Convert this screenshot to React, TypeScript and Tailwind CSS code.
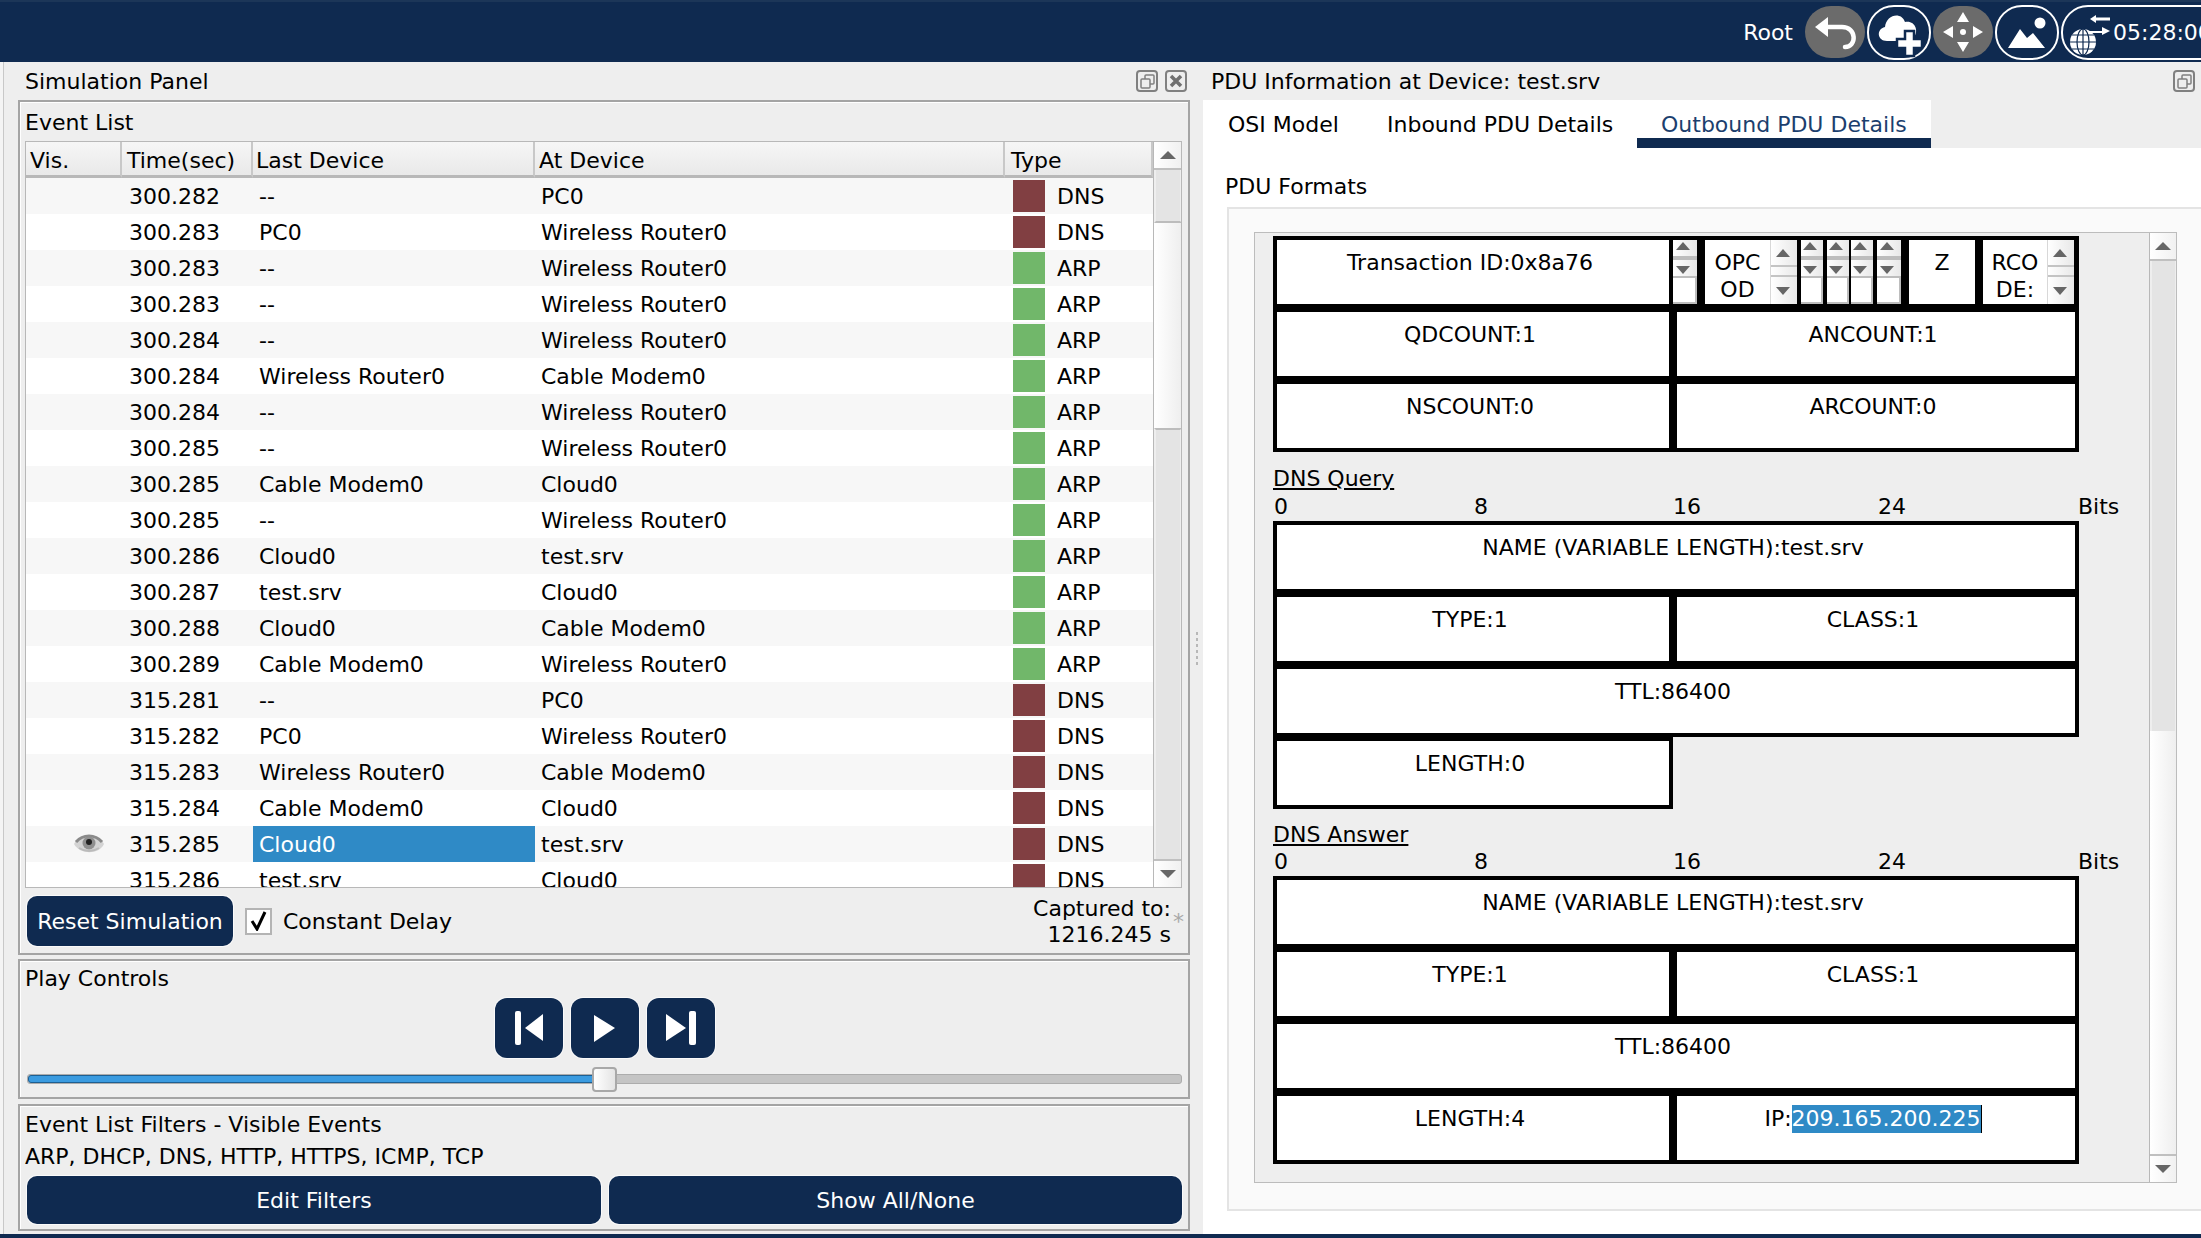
const rows = [
  ["300.282", "--", "PC0", "DNS"],
  ["300.283", "PC0", "Wireless Router0", "DNS"],
  ["300.283", "--", "Wireless Router0", "ARP"],
  ["300.283", "--", "Wireless Router0", "ARP"],
  ["300.284", "--", "Wireless Router0", "ARP"],
  ["300.284", "Wireless Router0", "Cable Modem0", "ARP"],
  ["300.284", "--", "Wireless Router0", "ARP"],
  ["300.285", "--", "Wireless Router0", "ARP"],
  ["300.285", "Cable Modem0", "Cloud0", "ARP"],
  ["300.285", "--", "Wireless Router0", "ARP"],
  ["300.286", "Cloud0", "test.srv", "ARP"],
  ["300.287", "test.srv", "Cloud0", "ARP"],
  ["300.288", "Cloud0", "Cable Modem0", "ARP"],
  ["300.289", "Cable Modem0", "Wireless Router0", "ARP"],
  ["315.281", "--", "PC0", "DNS"],
  ["315.282", "PC0", "Wireless Router0", "DNS"],
  ["315.283", "Wireless Router0", "Cable Modem0", "DNS"],
  ["315.284", "Cable Modem0", "Cloud0", "DNS"],
  ["315.285", "Cloud0", "test.srv", "DNS"],
  ["315.286", "test.srv", "Cloud0", "DNS"],
]

function UpArrow() {
  return (
    <svg width="16" height="8" viewBox="0 0 16 8" className="block">
      <path d="M8 0 L16 8 H0 Z" fill="#666" />
    </svg>
  )
}

function DownArrow() {
  return (
    <svg width="16" height="8" viewBox="0 0 16 8" className="block">
      <path d="M8 8 L16 0 H0 Z" fill="#666" />
    </svg>
  )
}

function SmallUp() {
  return (
    <svg width="14" height="8" viewBox="0 0 14 8" className="block">
      <path d="M7 0 L14 8 H0 Z" fill="#666" />
    </svg>
  )
}

function SmallDown() {
  return (
    <svg width="14" height="8" viewBox="0 0 14 8" className="block">
      <path d="M7 8 L14 0 H0 Z" fill="#666" />
    </svg>
  )
}

function RestoreIcon() {
  return (
    <svg width="22" height="22" viewBox="0 0 22 22" className="block">
      <rect x="1" y="1" width="20" height="20" rx="3" fill="none" stroke="#808080" strokeWidth="2" />
      <rect x="9" y="5" width="9" height="9" rx="1" fill="none" stroke="#808080" strokeWidth="1.5" />
      <rect x="5" y="9" width="9" height="9" rx="1" fill="#eeeeee" stroke="#808080" strokeWidth="1.5" />
    </svg>
  )
}

function CloseIcon() {
  return (
    <svg width="22" height="22" viewBox="0 0 22 22" className="block">
      <rect x="1" y="1" width="20" height="20" rx="3" fill="none" stroke="#808080" strokeWidth="2" />
      <path d="M6 6 L16 16 M16 6 L6 16" stroke="#707070" strokeWidth="3.5" />
    </svg>
  )
}

function EyeIcon() {
  return (
    <svg width="32" height="22" viewBox="0 0 32 22" className="block">
      <path d="M1 11 C6 1 25 0 31 11 C26 22 7 22 1 11 Z" fill="#d4d4d4" />
      <path d="M3 9 C10 1 22 1 29 9" stroke="#8a8a8a" strokeWidth="3" fill="none" />
      <circle cx="16" cy="10" r="6.5" fill="#8f8f8f" />
      <circle cx="16" cy="9" r="3" fill="#222" />
      <path d="M6 15 C12 19 20 19 26 15" stroke="#bbb" strokeWidth="2" fill="none" />
    </svg>
  )
}

function BackIcon() {
  return (
    <svg width="60" height="52" viewBox="0 0 60 52">
      <path d="M10 21 L23 11 V31 Z" fill="white" />
      <path d="M22 21 H37 C52 21 52 41 40 41" stroke="white" strokeWidth="4.5" strokeLinecap="round" fill="none" />
    </svg>
  )
}

function CloudPlusIcon() {
  return (
    <svg width="60" height="51" viewBox="0 0 60 51">
      <path d="M18 34 C8 34 7 22 16 20 C17 8 32 4 36 15 C46 13 50 24 45 30 L42 34 Z" fill="white" />
      <path d="M36 24 H45 V32 H53 V41 H45 V49 H36 V41 H28 V32 H36 Z" fill="white" stroke="#0f2a50" strokeWidth="2.5" />
    </svg>
  )
}

function MoveIcon() {
  return (
    <svg width="60" height="52" viewBox="0 0 60 52">
      <path d="M30 6 L36 16 H24 Z M30 46 L36 36 H24 Z M10 26 L20 20 V32 Z M50 26 L40 20 V32 Z" fill="white" />
      <circle cx="30" cy="26" r="3" fill="white" />
    </svg>
  )
}

function ImageIcon() {
  return (
    <svg width="60" height="51" viewBox="0 0 60 51">
      <circle cx="43" cy="16" r="5.5" fill="white" />
      <path d="M11 41 L23 22 L30 31 L36 26 L48 41 Z" fill="white" />
    </svg>
  )
}

function NetIcon() {
  return (
    <svg width="50" height="51" viewBox="0 0 50 51" className="shrink-0">
      <path d="M27 12 L33 8 V10.5 H47 V13.5 H33 V16 Z" fill="white" />
      <path d="M22 24 H39 V20 L47 24 L39 28 V26 H26 L24 30 Z" fill="white" />
      <circle cx="20" cy="35" r="13" fill="white" />
      <g stroke="#0f2a50" strokeWidth="1.2" fill="none">
        <ellipse cx="20" cy="35" rx="6" ry="13" />
        <path d="M20 22 V48 M7 35 H33 M9 28 H31 M9 42 H31" />
      </g>
    </svg>
  )
}

function TableScrollbar() {
  return (
    <div className="w-[29px] shrink-0 flex flex-col border-l border-[#b8b8b8] h-full">
      <div className="h-[28px] shrink-0 flex items-center justify-center bg-gradient-to-r from-white to-[#f0f0f0] border-b-2 border-[#c0c0c0]">
        <UpArrow />
      </div>
      <div className="h-[53px] shrink-0 bg-[#e4e4e4] border-b-2 border-[#bcbcbc] border-x-2 border-x-[#eeeeee]" />
      <div className="h-[205px] shrink-0 bg-gradient-to-r from-white to-[#eeeeee]" />
      <div className="flex-1 bg-[#e4e4e4] border-t-2 border-[#bcbcbc] border-x-2 border-x-[#eeeeee]" />
      <div className="h-[28px] shrink-0 flex items-center justify-center bg-gradient-to-r from-white to-[#f0f0f0] border-t-2 border-[#c0c0c0]">
        <DownArrow />
      </div>
    </div>
  )
}

function EventTable() {
  const head = "pt-[4px] flex items-center h-full bg-gradient-to-b from-[#f6f6f6] to-[#e9e9e9] border-b-[3px] border-[#b8b8b8] border-r-2 border-r-[#c8c8c8]"
  return (
    <div className="h-[747px] flex border border-[#b8b8b8] bg-white overflow-hidden">
      <div className="w-[1127px] shrink-0 flex flex-col">
        <div className="h-[36px] shrink-0 grid grid-cols-[96px_131px_282px_470px_148px]">
          <div className={`${head} pl-[4px]`}>Vis.</div>
          <div className={`${head} pl-[5px]`}>Time(sec)</div>
          <div className={`${head} pl-[3px]`}>Last Device</div>
          <div className={`${head} pl-[4px]`}>At Device</div>
          <div className={`${head} pl-[6px]`}>Type</div>
        </div>
        <div className="flex-1 overflow-hidden">
          {rows.map((r, i) => (
            <div
              key={i}
              className={`h-[36px] grid grid-cols-[96px_131px_282px_470px_148px] items-center ${i % 2 === 0 ? "bg-[#f7f7f7]" : "bg-white"}`}
            >
              <div className="flex justify-end pr-[17px]">{i === 18 && <EyeIcon />}</div>
              <div className="pl-[7px] pt-[2px]">{r[0]}</div>
              <div className={`pl-[6px] pt-[2px] h-full flex items-center ${i === 18 ? "bg-[#2f8ac6] text-white" : ""}`}>{r[1]}</div>
              <div className="pl-[6px] pt-[2px]">{r[2]}</div>
              <div className="pl-[8px] flex items-center gap-[12px]">
                <span className={`w-[32px] h-[32px] ${r[3] === "DNS" ? "bg-[#813f42]" : "bg-[#71b76a]"}`} />
                <span className="pt-[2px]">{r[3]}</span>
              </div>
            </div>
          ))}
        </div>
      </div>
      <TableScrollbar />
    </div>
  )
}

function MiniScroll({ w }: { w: string }) {
  return (
    <div className={`${w} h-full shrink-0 flex flex-col bg-white`}>
      <div className="h-[36px] shrink-0 flex flex-col items-center justify-between py-[2px] bg-gradient-to-r from-white to-[#e8e8e8]">
        <div className="mr-[4px]"><SmallUp /></div>
        <div className="h-[4px] w-full bg-[#bdbdbd]" />
        <div className="mr-[4px]"><SmallDown /></div>
      </div>
      <div className="flex-1 bg-white border-t-2 border-r-2 border-b-2 border-[#bdbdbd] border-l-0" />
    </div>
  )
}

function MiniSpin() {
  return (
    <div className="w-[27px] h-full shrink-0 flex flex-col border-l border-[#d8d8d8] bg-gradient-to-r from-white to-[#e8e8e8]">
      <div className="h-[27px] flex items-center justify-center pr-[2px] border-b-2 border-[#c4c4c4]">
        <SmallUp />
      </div>
      <div className="h-[10px] border-b-2 border-[#c4c4c4]" />
      <div className="flex-1 flex items-center justify-center pr-[2px]">
        <SmallDown />
      </div>
    </div>
  )
}

function Cell({ w, children }: { w: string; children: React.ReactNode }) {
  return (
    <div className={`${w} h-[72px] border-4 border-black bg-white pt-[9px] pr-[6px] leading-[28px] text-center`}>{children}</div>
  )
}

function BitsRuler() {
  return (
    <div className="flex h-[26px] items-center pl-[1px] pb-[2px] leading-[22px]">
      <span className="w-[200px]">0</span>
      <span className="w-[199px]">8</span>
      <span className="w-[205px]">16</span>
      <span className="w-[200px]">24</span>
      <span>Bits</span>
    </div>
  )
}

function HeaderFrame() {
  return (
    <div className="w-[806px]">
      <div className="h-[72px] border-4 border-black bg-black flex">
        <div className="w-[392px] h-full shrink-0 bg-white pt-[9px] pr-[6px] leading-[28px] text-center">Transaction ID:0x8a76</div>
        <div className="w-[4px] shrink-0" />
        <MiniScroll w="w-[24px]" />
        <div className="w-[8px] shrink-0" />
        <div className="w-[65px] h-full shrink-0 bg-white pt-[9px] leading-[27px] text-center">OPC<br />OD</div>
        <MiniSpin />
        <div className="w-[4px] shrink-0" />
        <MiniScroll w="w-[22px]" />
        <div className="w-[4px] shrink-0" />
        <MiniScroll w="w-[22px]" />
        <div className="w-[2px] shrink-0" />
        <MiniScroll w="w-[22px]" />
        <div className="w-[4px] shrink-0" />
        <MiniScroll w="w-[24px]" />
        <div className="w-[8px] shrink-0" />
        <div className="w-[66px] h-full shrink-0 bg-white pt-[9px] leading-[28px] text-center">Z</div>
        <div className="w-[8px] shrink-0" />
        <div className="w-[64px] h-full shrink-0 bg-white pt-[9px] leading-[27px] text-center">RCO<br />DE:</div>
        <MiniSpin />
      </div>
      <div className="flex">
        <Cell w="w-[400px]">QDCOUNT:1</Cell>
        <Cell w="w-[406px]">ANCOUNT:1</Cell>
      </div>
      <div className="flex">
        <Cell w="w-[400px]">NSCOUNT:0</Cell>
        <Cell w="w-[406px]">ARCOUNT:0</Cell>
      </div>
    </div>
  )
}

function RecordFrame({ len, ip }: { len: string; ip?: boolean }) {
  return (
    <div className="w-[806px]">
      <Cell w="w-[806px]">NAME (VARIABLE LENGTH):test.srv</Cell>
      <div className="flex">
        <Cell w="w-[400px]">TYPE:1</Cell>
        <Cell w="w-[406px]">CLASS:1</Cell>
      </div>
      <Cell w="w-[806px]">TTL:86400</Cell>
      <div className="flex">
        <Cell w="w-[400px]">{len}</Cell>
        {ip && (
          <Cell w="w-[406px]">
            IP:<span className="inline-block h-[28px] bg-[#2f8ac6] text-white border-r border-black">209.165.200.225</span>
          </Cell>
        )}
      </div>
    </div>
  )
}

export default function App() {
  return (
    <div className="w-[2201px] h-[1238px] overflow-hidden flex flex-col bg-[#eeeeee] text-black text-[22px] leading-none font-['DejaVu_Sans',sans-serif]">
      {/* top bar */}
      <div className="h-[62px] shrink-0 bg-[#0f2a50] border-t-2 border-[#1c3658] flex items-center justify-end text-white">
        <span className="mr-[12px] pt-[2px]">Root</span>
        <div className="mr-[2px] w-[60px] h-[52px] rounded-[26px] bg-[#6b6b6b] flex items-center justify-center"><BackIcon /></div>
        <div className="mr-[2px] w-[64px] h-[55px] rounded-[27px] border-2 border-white flex items-center justify-center"><CloudPlusIcon /></div>
        <div className="mr-[2px] w-[60px] h-[52px] rounded-[26px] bg-[#6b6b6b] flex items-center justify-center"><MoveIcon /></div>
        <div className="mr-[2px] w-[64px] h-[55px] rounded-[27px] border-2 border-white flex items-center justify-center"><ImageIcon /></div>
        <div className="mr-[-60px] w-[200px] h-[55px] rounded-[27px] border-2 border-white flex items-center">
          <NetIcon />
          <span className="pt-[2px]">05:28:00</span>
        </div>
      </div>

      <div className="flex-1 flex min-h-0">
        {/* left edge strip */}
        <div className="w-[4px] shrink-0 bg-[#f4f4f4] border-r border-[#c8c8c8]" />

        {/* simulation panel */}
        <div className="w-[1186px] shrink-0 pl-[14px] flex flex-col">
          <div className="h-[38px] shrink-0 flex items-center justify-between pl-[7px] pr-[3px]">
            <span className="pt-[2px]">Simulation Panel</span>
            <div className="flex gap-[7px]">
              <RestoreIcon />
              <CloseIcon />
            </div>
          </div>

          <div className="h-[855px] shrink-0 border-2 border-[#a4a4a4] shadow-[inset_1px_1px_0_#ffffff] pl-[5px] pr-[6px]">
            <div className="h-[39px] flex items-center pt-[3px]">Event List</div>
            <EventTable />
            <div className="flex items-center h-[50px] mt-[8px]">
              <button className="ml-[2px] w-[206px] h-[50px] pt-[1px] rounded-[10px] bg-[#0f2a50] text-white ring-1 ring-white/70">Reset Simulation</button>
              <span className="ml-[12px] w-[27px] h-[27px] border-2 border-[#b4b4b4] bg-white flex items-center justify-center">
                <svg width="17" height="20" viewBox="0 0 17 20">
                  <path d="M2 10 L7 18 L15 1" stroke="black" strokeWidth="3" fill="none" />
                </svg>
              </span>
              <span className="ml-[11px] pt-[1px]">Constant Delay</span>
              <div className="ml-auto mr-[11px] pt-[1px] text-right leading-[26px] relative">
                <div>Captured to:</div>
                <div>1216.245 s</div>
                <span className="absolute right-[-13px] top-[16px] leading-none text-[#a8a8a8]">*</span>
              </div>
            </div>
          </div>

          <div className="h-[140px] mt-[4px] shrink-0 border-2 border-[#a4a4a4] shadow-[inset_1px_1px_0_#ffffff] pl-[5px] pr-[6px]">
            <div className="h-[36px] flex items-center">Play Controls</div>
            <div className="flex gap-[8px] ml-[470px] h-[60px] mt-[1px]">
              <button className="w-[68px] h-[60px] rounded-[12px] bg-[#0f2a50] ring-1 ring-white/70">
                <svg width="68" height="60" viewBox="0 0 68 60"><rect x="20" y="13" width="6" height="34" rx="2" fill="white" /><path d="M30 30 L48 16 V43 Z" fill="white" /></svg>
              </button>
              <button className="w-[68px] h-[60px] rounded-[12px] bg-[#0f2a50] ring-1 ring-white/70">
                <svg width="68" height="60" viewBox="0 0 68 60"><path d="M23 17 L44 30 L23 44 Z" fill="white" /></svg>
              </button>
              <button className="w-[68px] h-[60px] rounded-[12px] bg-[#0f2a50] ring-1 ring-white/70">
                <svg width="68" height="60" viewBox="0 0 68 60"><path d="M19 16 L39 30 L19 43 Z" fill="white" /><rect x="42" y="13" width="7" height="34" rx="2" fill="white" /></svg>
              </button>
            </div>
            <div className="relative mt-[16px] ml-[2px] h-[10px] w-[1155px] rounded-[3px] bg-[#c4c4c4] border border-[#acacac]">
              <div className="h-full w-[565px] rounded-l-[3px] bg-[#3a9be0] border border-[#1d5f92]" />
              <div className="absolute left-[564px] top-[-8px] w-[25px] h-[25px] rounded-[4px] bg-gradient-to-r from-white to-[#e4e4e4] border-2 border-[#a8a8a8]" />
            </div>
          </div>

          <div className="h-[127px] mt-[5px] shrink-0 border-2 border-[#a4a4a4] shadow-[inset_1px_1px_0_#ffffff] pl-[5px] pr-[6px]">
            <div className="h-[34px] flex items-center pt-[4px]">Event List Filters - Visible Events</div>
            <div className="h-[32px] flex items-center pt-[2px]">ARP, DHCP, DNS, HTTP, HTTPS, ICMP, TCP</div>
            <div className="flex gap-[8px] ml-[2px] mt-[4px]">
              <button className="w-[574px] h-[48px] pt-[2px] rounded-[10px] bg-[#0f2a50] text-white ring-1 ring-white/70">Edit Filters</button>
              <button className="w-[573px] h-[48px] pt-[2px] rounded-[10px] bg-[#0f2a50] text-white ring-1 ring-white/70">Show All/None</button>
            </div>
          </div>
        </div>

        {/* splitter */}
        <div className="w-[13px] shrink-0 flex flex-col items-center justify-center gap-[3px]">
          {[0, 1, 2, 3, 4, 5].map((d) => (
            <span key={d} className="w-[2px] h-[3px] bg-[#b8b8b8]" />
          ))}
        </div>

        {/* pdu panel */}
        <div className="flex-1 min-w-0 flex flex-col">
          <div className="h-[38px] shrink-0 flex items-center justify-between pl-[8px] pr-[6px]">
            <span className="pt-[2px]">PDU Information at Device: test.srv</span>
            <RestoreIcon />
          </div>
          <div className="flex-1 min-h-0 flex flex-col bg-white">
            <div className="h-[48px] shrink-0 flex bg-[#eeeeee]">
              <div className="w-[434px] flex bg-white">
                <div className="pl-[25px] w-[184px] pt-[14px]">OSI Model</div>
                <div className="w-[250px] pt-[14px]">Inbound PDU Details</div>
              </div>
              <div className="w-[294px] bg-white border-b-[10px] border-[#0f2a50] pl-[24px] pt-[14px] text-[#1c3f6e]">Outbound PDU Details</div>
            </div>
            <div className="h-[59px] shrink-0 flex items-center pl-[22px] pt-[19px]">PDU Formats</div>
            <div className="ml-[24px] h-[1004px] shrink-0 bg-[#fafafa] border-l-2 border-t-2 border-b-2 border-[#e4e4e4] pt-[23px] pl-[25px]">
              <div className="w-[923px] h-[951px] border border-[#bcbcbc] bg-[#eeeeee] flex overflow-hidden">
                <div className="w-[894px] shrink-0 pl-[18px] pt-[3px]">
                  <HeaderFrame />
                  <div className="h-[43px] pt-[14px] leading-[26px]"><span className="underline">DNS Query</span></div>
                  <BitsRuler />
                  <RecordFrame len="LENGTH:0" />
                  <div className="h-[41px] pt-[13px] leading-[26px]"><span className="underline">DNS Answer</span></div>
                  <BitsRuler />
                  <RecordFrame len="LENGTH:4" ip />
                </div>
                <div className="w-[28px] shrink-0 flex flex-col border-l border-[#b8b8b8]">
                  <div className="h-[28px] shrink-0 flex items-center justify-center pr-[2px] bg-gradient-to-r from-white to-[#f0f0f0] border-b-2 border-[#c0c0c0]"><UpArrow /></div>
                  <div className="h-[470px] shrink-0 bg-[#e4e4e4] border-x-2 border-[#eeeeee]" />
                  <div className="flex-1 bg-gradient-to-r from-white to-[#eeeeee]" />
                  <div className="h-[28px] shrink-0 flex items-center justify-center pr-[2px] bg-gradient-to-r from-white to-[#f0f0f0] border-t-2 border-[#c0c0c0]"><DownArrow /></div>
                </div>
              </div>
            </div>
          </div>
        </div>
      </div>

      <div className="h-[4px] shrink-0 bg-[#0f2a50]" />
    </div>
  )
}
